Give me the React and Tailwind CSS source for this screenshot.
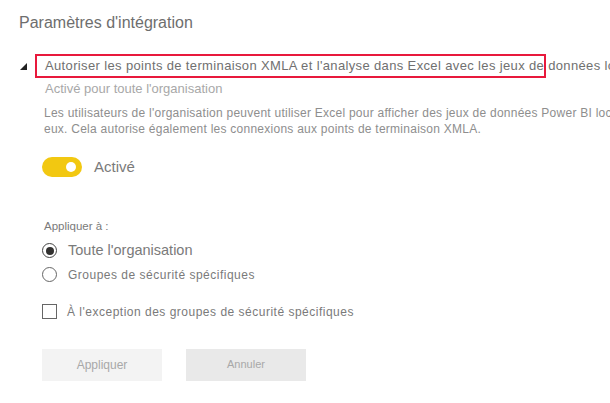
export default function App() {
  const font = { fontFamily: '"Liberation Sans", Arial, sans-serif' };
  return (
    <div className="w-[610px] h-[403px] bg-white overflow-hidden relative" style={font}>
      <div className="pl-[19px] pt-[12px]">
        <div className="text-[16px] leading-[22px] text-[#6e6e6e] whitespace-nowrap">Paramètres d'intégration</div>
      </div>
      <div className="flex items-center mt-[20px] pl-[20px]">
        <svg width="7" height="7" viewBox="0 0 7 7" className="mr-[8px] mt-[1px] shrink-0">
          <polygon points="0,7 7,0 7,7" fill="#222" />
        </svg>
        <div className="w-[511px] h-[24px] shrink-0 border-[2.5px] border-[#e8193c] flex items-center pl-[8px] whitespace-nowrap overflow-visible">
          <span className="text-[13px] text-[#707070] tracking-[0.36px]">Autoriser les points de terminaison XMLA et l'analyse dans Excel avec les jeux de données locaux</span>
        </div>
      </div>
      <div className="pl-[45px] mt-[3px] text-[13px] leading-[16px] text-[#a8a8a8] whitespace-nowrap">Activé pour toute l'organisation</div>
      <div className="pl-[44px] mt-[8px] text-[12px] leading-[16px] text-[#8e8e8e] whitespace-nowrap tracking-[0.25px]">
        <div>Les utilisateurs de l'organisation peuvent utiliser Excel pour afficher des jeux de données Power BI locaux et interagir avec</div>
        <div>eux. Cela autorise également les connexions aux points de terminaison XMLA.</div>
      </div>
      <div className="flex items-center pl-[42px] mt-[19px]">
        <div className="w-[40px] h-[20px] rounded-full bg-[#f2c811] flex items-center justify-end pr-[6px]">
          <div className="w-[10px] h-[10px] rounded-full bg-white" />
        </div>
        <span className="ml-[12px] text-[15px] text-[#7a7a7a]">Activé</span>
      </div>
      <div className="pl-[44px] mt-[39px] text-[11.5px] leading-[16px] text-[#7a7a7a]">Appliquer à :</div>
      <div className="pl-[42px] mt-[7px] flex flex-col">
        <div className="flex items-center h-[20px]">
          <div className="w-[15px] h-[15px] rounded-full border border-[#444] flex items-center justify-center">
            <div className="w-[8px] h-[8px] rounded-full bg-[#323130]" />
          </div>
          <span className="ml-[11px] text-[14.5px] text-[#7a7a7a]">Toute l'organisation</span>
        </div>
        <div className="flex items-center h-[20px] mt-[4px]">
          <div className="w-[15px] h-[15px] rounded-full border border-[#666]" />
          <span className="ml-[11px] text-[12px] text-[#7a7a7a] tracking-[0.5px]">Groupes de sécurité spécifiques</span>
        </div>
        <div className="flex items-center h-[20px] mt-[17px]">
          <div className="w-[15px] h-[15px] border border-[#666]" />
          <span className="ml-[10px] text-[12px] text-[#7a7a7a] tracking-[0.5px]">À l'exception des groupes de sécurité spécifiques</span>
        </div>
      </div>
      <div className="flex pl-[42px] mt-[27px] gap-[24px]">
        <div className="w-[120px] h-[32px] bg-[#f3f3f3] flex items-center justify-center text-[12px] text-[#a8a8a8]">Appliquer</div>
        <div className="w-[120px] h-[32px] bg-[#e9e9e9] flex items-center justify-center text-[11px] text-[#a8a8a8]">Annuler</div>
      </div>
    </div>
  );
}
